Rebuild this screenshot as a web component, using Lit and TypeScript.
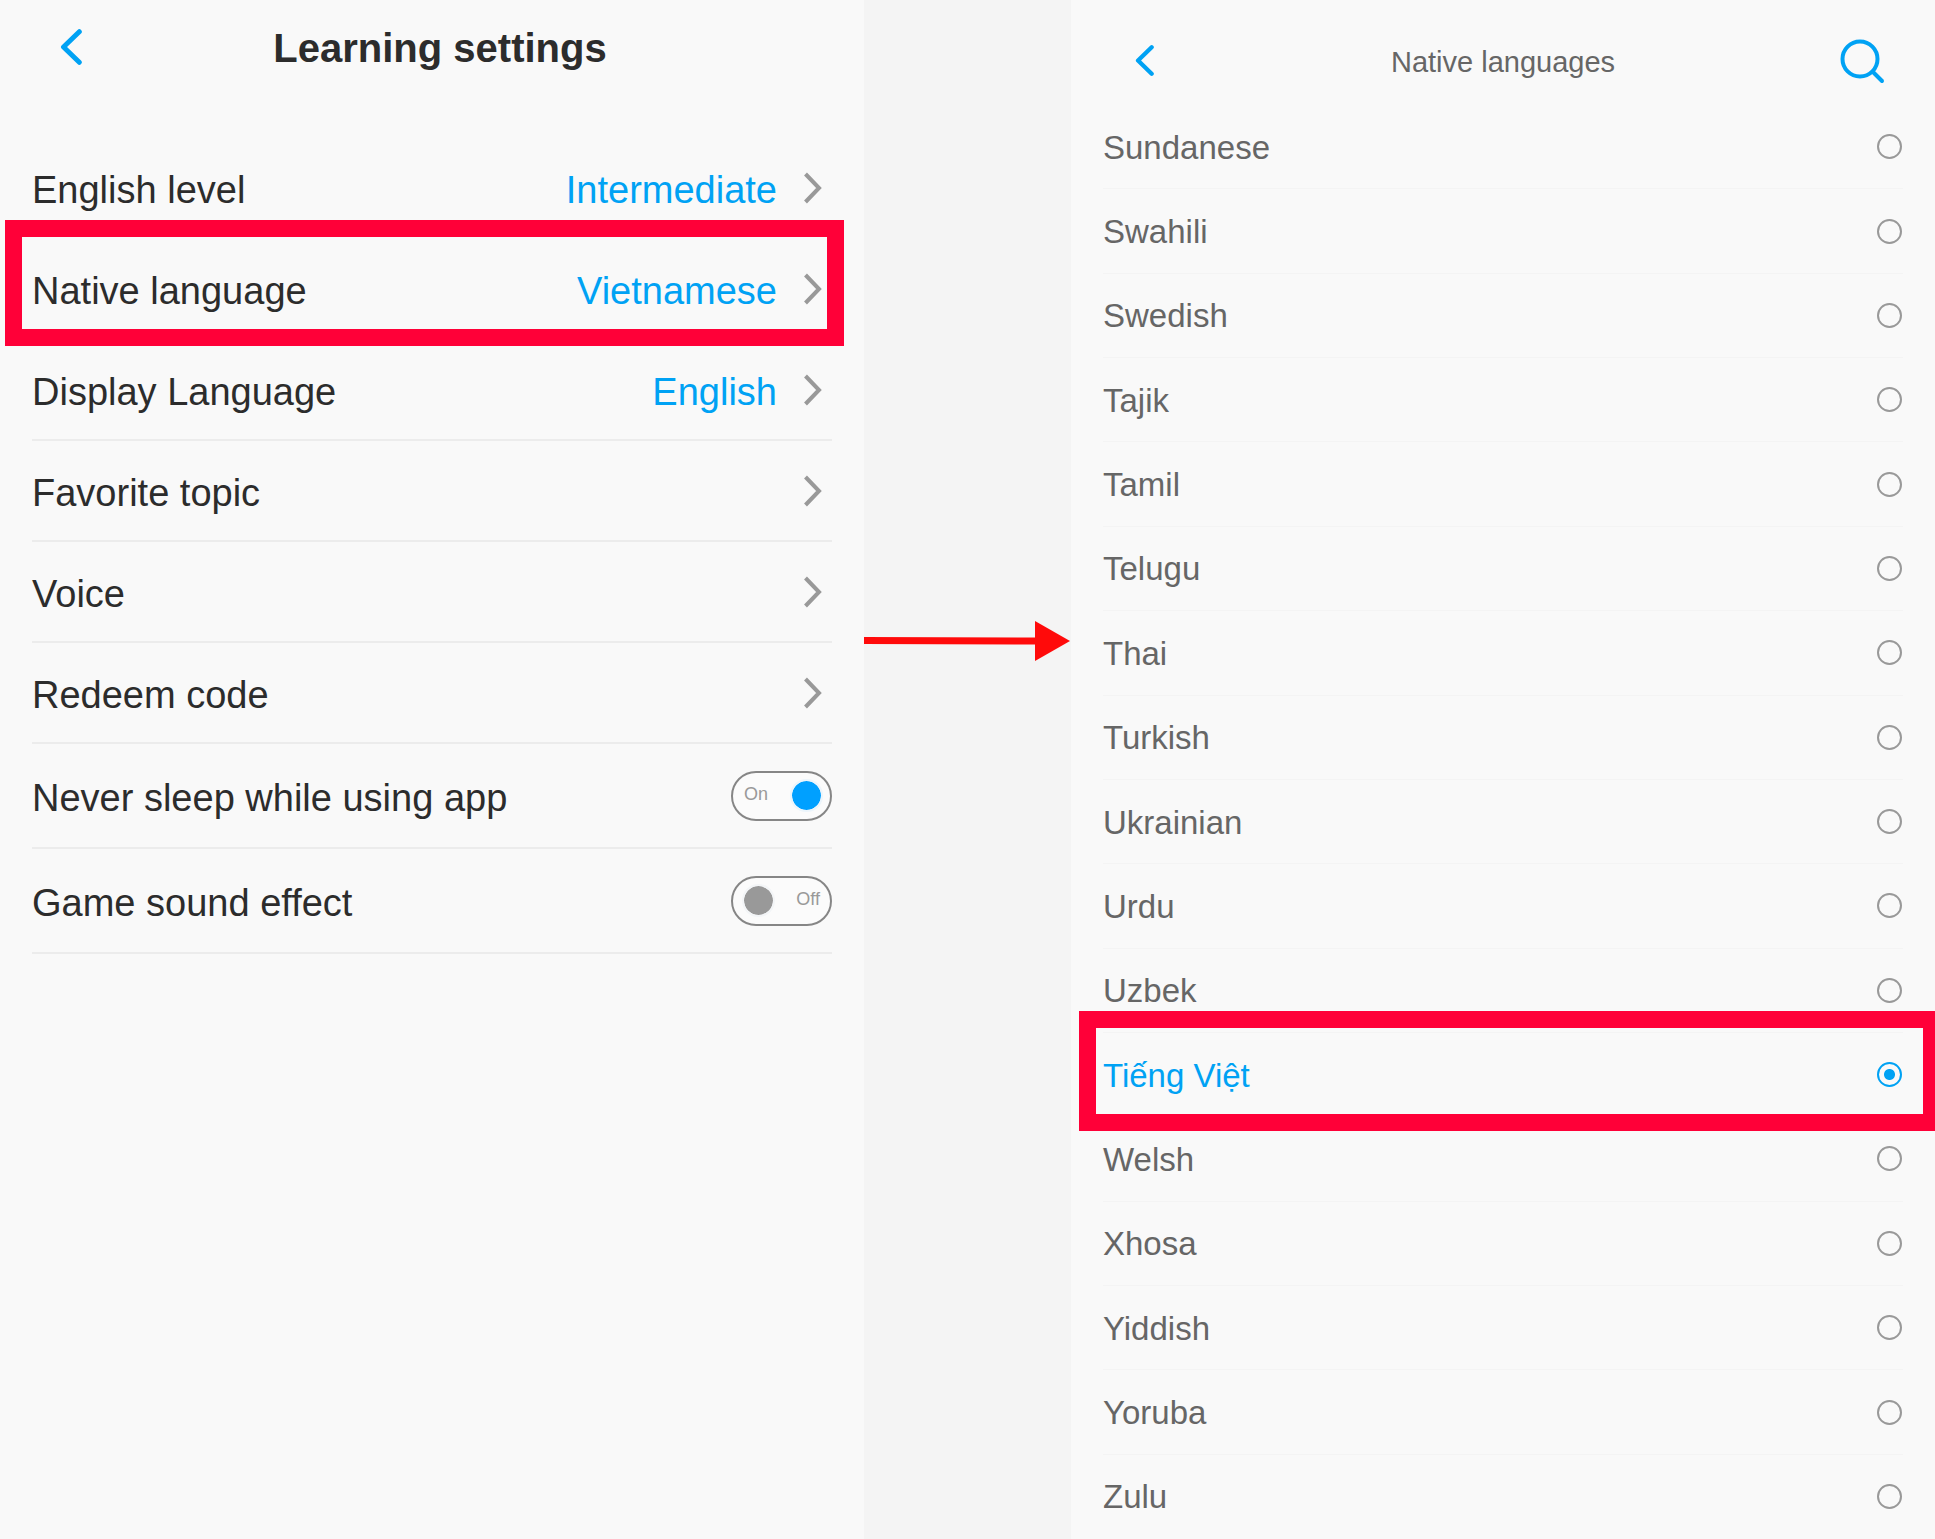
import { LitElement, html, css, svg, nothing } from "lit";
import { customElement, property, state } from "lit/decorators.js";
import { classMap } from "lit/directives/class-map.js";

const SETTINGS = [
  { label: "English level", value: "Intermediate" },
  { label: "Native language", value: "Vietnamese", marked: true },
  { label: "Display Language", value: "English" },
  { label: "Favorite topic" },
  { label: "Voice" },
  { label: "Redeem code" },
];

const LANGUAGES = [
  "Sundanese", "Swahili", "Swedish", "Tajik", "Tamil", "Telugu", "Thai",
  "Turkish", "Ukrainian", "Urdu", "Uzbek", "Tiếng Việt", "Welsh", "Xhosa",
  "Yiddish", "Yoruba", "Zulu",
];

const shared = css`
  :host {
    display: block;
    font-family: "Liberation Sans", Arial, Helvetica, sans-serif;
    --blue: #00a2f4;
    --mark: #ff0038;
  }
  * { box-sizing: border-box; }
  h1, ul { margin: 0; padding: 0; }
  ul { list-style: none; }
  button {
    border: 0;
    padding: 0;
    background: none;
    font: inherit;
    color: inherit;
    cursor: pointer;
  }
  svg { display: block; }
  .marker {
    position: absolute;
    border: 17px solid var(--mark);
    pointer-events: none;
  }
`;

const backIcon = (width: number, height: number) => html`
  <svg width=${width} height=${height} viewBox="0 0 22 36" fill="none" aria-hidden="true">
    ${svg`<path d="M19.300 2.700 3.500 18l15.800 15.300" stroke="#00a2f4" stroke-width="5" stroke-linecap="round" stroke-linejoin="round"/>`}
  </svg>`;

@customElement("toggle-switch")
export class ToggleSwitch extends LitElement {
  @property({ type: Boolean }) on = false;
  @property() label = "";

  static styles = [shared, css`
    .switch {
      display: flex;
      align-items: center;
      justify-content: space-between;
      width: 101px;
      height: 50px;
      padding: 0 8px;
      border: 2px solid #868686;
      border-radius: 25px;
      background: #fbfbfb;
    }
    .switch.on { padding-left: 11px; padding-right: 7px; }
    .switch.off { flex-direction: row-reverse; padding: 0 10px 0 9px; }
    .text {
      font-size: 18px;
      line-height: 20px;
      padding-bottom: 3px;
      color: #999;
    }
    .knob {
      width: 33px;
      height: 33px;
      border: 2px solid #f3f5f7;
      border-radius: 50%;
      background: #999 padding-box;
    }
    .on .knob { background-color: #00a0ff; border-color: #ecf5fb; }
  `];

  render() {
    return html`
      <button
        class=${classMap({ switch: true, on: this.on, off: !this.on })}
        role="switch"
        aria-checked=${this.on ? "true" : "false"}
        aria-label=${this.label}
        @click=${() => (this.on = !this.on)}
      >
        <span class="text">${this.on ? "On" : "Off"}</span>
        <span class="knob"></span>
      </button>`;
  }
}

@customElement("settings-panel")
export class SettingsPanel extends LitElement {
  static styles = [shared, css`
    .header {
      display: flex;
      align-items: center;
      height: 94px;
      padding: 0 66px 0 60px;
    }
    .title {
      flex: 1;
      text-align: center;
      font-size: 40px;
      line-height: 48px;
      padding-top: 2px;
      color: #2c2c2c;
    }
    .list {
      padding: 44px 32px 0;
      font-size: 38px;
      line-height: 44px;
      color: #2c2c2c;
    }
    .item {
      position: relative;
      border-bottom: 2px solid #ececec;
    }
    .row {
      display: flex;
      align-items: center;
      width: 100%;
      height: 99px;
      padding-right: 10px;
      text-align: left;
    }
    .item.tall .row { height: 103px; padding-right: 0; }
    .item.bare { border-color: transparent; }
    .label, .value { padding-top: 4px; }
    .label { flex: 1; }
    .value { color: var(--blue); margin-right: 27px; }
    .marker { top: -19px; right: -12px; bottom: -8px; left: -27px; }
  `];

  render() {
    return html`
      <header class="header">
        <button aria-label="Back">${backIcon(22, 36)}</button>
        <h1 class="title">Learning settings</h1>
      </header>
      <ul class="list">
        ${SETTINGS.map((s, i) => html`
          <li class=${classMap({ item: true, bare: i < 2 })}>
            <button class="row">
              <span class="label">${s.label}</span>
              ${s.value ? html`<span class="value">${s.value}</span>` : nothing}
              <svg width="18" height="32" viewBox="0 0 18 32" fill="none" aria-hidden="true">
                <path d="M1.500 2 15 16 1.500 30" stroke="#999" stroke-width="4"/>
              </svg>
            </button>
            ${s.marked ? html`<span class="marker"></span>` : nothing}
          </li>`)}
        <li class="item tall">
          <div class="row">
            <span class="label">Never sleep while using app</span>
            <toggle-switch on label="Never sleep while using app"></toggle-switch>
          </div>
        </li>
        <li class="item tall">
          <div class="row">
            <span class="label">Game sound effect</span>
            <toggle-switch label="Game sound effect"></toggle-switch>
          </div>
        </li>
      </ul>`;
  }
}

@customElement("language-panel")
export class LanguagePanel extends LitElement {
  @state() private selected = "Tiếng Việt";

  static styles = [shared, css`
    :host {
      display: flex;
      flex-direction: column;
      overflow: hidden;
      color: #666;
    }
    .header {
      display: grid;
      grid-template-columns: 60px 1fr 74px;
      align-items: center;
      height: 105px;
      padding: 16px 50px 0 64px;
    }
    .title {
      text-align: center;
      font-size: 29px;
      font-weight: 400;
      line-height: 36px;
      padding-top: 2px;
    }
    .search { justify-self: end; }
    .list {
      flex: 1;
      display: flex;
      flex-direction: column;
      padding: 0 32px;
      font-size: 33px;
      line-height: 40px;
    }
    .item {
      position: relative;
      flex: 1 0 auto;
      display: flex;
      min-height: 60px;
      border-bottom: 1px solid #f4f4f4;
    }
    .item:last-child { border-color: transparent; }
    .row {
      flex: 1;
      display: flex;
      align-items: center;
      justify-content: space-between;
      padding-right: 1px;
      cursor: pointer;
    }
    .name { padding-top: 2px; }
    .radio {
      appearance: none;
      width: 25px;
      height: 25px;
      margin: 0;
      border: 2px solid #999;
      border-radius: 50%;
    }
    .radio:checked {
      border-color: var(--blue);
      background: radial-gradient(circle, var(--blue) 5px, transparent 6px);
    }
    .chosen { color: var(--blue); }
    .marker { top: -22px; right: -37px; bottom: -15px; left: -24px; }
  `];

  render() {
    return html`
      <header class="header">
        <button class="back" aria-label="Back">${backIcon(19, 31)}</button>
        <h1 class="title">Native languages</h1>
        <button class="search" aria-label="Search">
          <svg width="46" height="46" viewBox="0 0 46 46" fill="none" stroke="#00a2f4" stroke-width="4" stroke-linecap="round" aria-hidden="true">
            <circle cx="21" cy="21" r="17.500"/>
            <path d="M34 34 43 43"/>
          </svg>
        </button>
      </header>
      <ul class="list">
        ${LANGUAGES.map((name) => html`
          <li class="item">
            <label class=${classMap({ row: true, chosen: name === this.selected })}>
              <span class="name">${name}</span>
              <input
                class="radio"
                type="radio"
                name="language"
                .checked=${name === this.selected}
                @change=${() => (this.selected = name)}
              />
            </label>
            ${name === this.selected ? html`<span class="marker"></span>` : nothing}
          </li>`)}
      </ul>`;
  }
}

@customElement("app-root")
export class AppRoot extends LitElement {
  static styles = [shared, css`
    .page {
      display: grid;
      grid-template-columns: 864fr 207fr 864fr;
      min-height: 100vh;
      background: #f9f9f9;
    }
    .between {
      display: grid;
      grid-template-rows: 621fr 40px 878fr;
      background: #f4f4f4;
    }
    .arrow { grid-row: 2; width: 100%; height: 40px; }
  `];

  render() {
    return html`
      <main class="page">
        <settings-panel></settings-panel>
        <div class="between">
          <svg class="arrow" viewBox="0 0 207 40" preserveAspectRatio="xMaxYMid meet" aria-hidden="true">
            <path d="M0 16 171 16.500V0L206 20 171 40V23.500L0 23Z" fill="#ff0a0a"/>
          </svg>
        </div>
        <language-panel></language-panel>
      </main>`;
  }
}
